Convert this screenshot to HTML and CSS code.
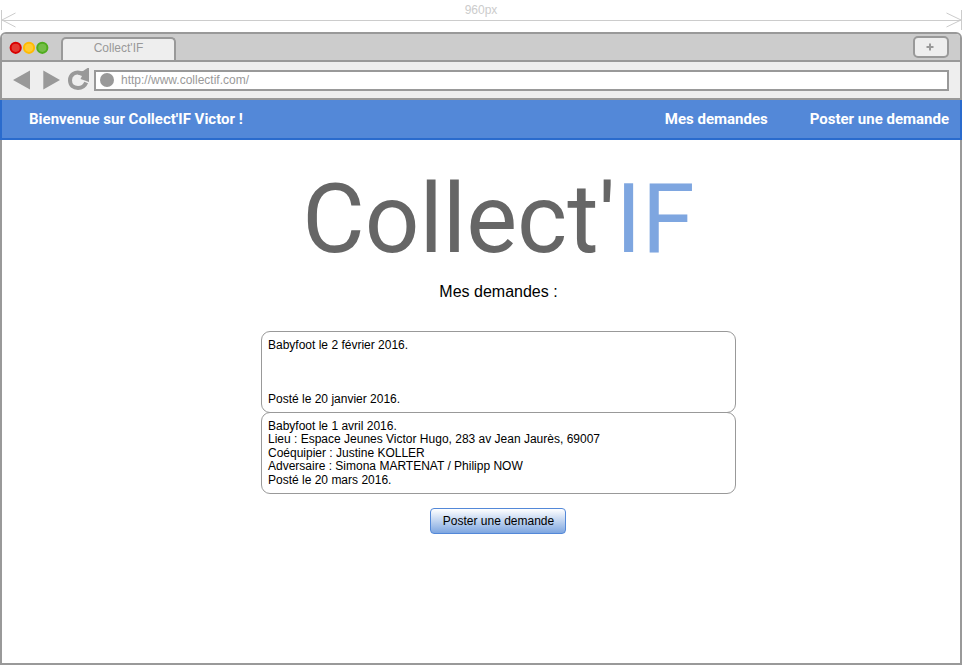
FILE: index.html
```html
<!DOCTYPE html>
<html lang="fr">
<head>
<meta charset="utf-8">
<title>Collect'IF</title>
<link rel="stylesheet" href="styles.css">
</head>
<body>
<div class="ruler">
  <svg class="ruler-lines" viewBox="0 0 962 32" width="962" height="32">
    <path d="M1.5 10V30M961.5 10V30M2 20.5H961M15.500 13L2 20L15.500 27M946.500 13L961 20L946.500 27"/>
  </svg>
  <span class="ruler-label">960px</span>
</div>
<div class="browser">
  <div class="tabbar">
    <svg class="lights" viewBox="0 0 42 14" width="42" height="14">
      <circle cx="7.700" cy="7.800" r="5.100" fill="#e33b32" stroke="#d90000" stroke-width="2"/>
      <circle cx="21" cy="7.800" r="5.100" fill="#ffcb32" stroke="#ffba00" stroke-width="2"/>
      <circle cx="34.300" cy="7.800" r="5.100" fill="#74bd46" stroke="#4fac1d" stroke-width="2"/>
    </svg>
    <div class="tab">Collect'IF</div>
    <button class="new-tab">
      <svg viewBox="0 0 8 8" width="8" height="8"><path d="M4 .5V7.500M.5 4H7.500"/></svg>
    </button>
  </div>
  <div class="toolbar">
    <svg class="controls" viewBox="0 0 92 36" width="92" height="36">
      <path d="M11 18L28 8.500V27.500ZM58 18L41.300 8.500V27.500Z" fill="#999"/>
      <path d="M78.500 10.900C73 9.500 68 12.500 68 18.300C68 23.300 71.500 26 76 26C80 26 82.600 24.400 84.200 20.500" fill="none" stroke="#999" stroke-width="4"/>
      <path d="M76 9.200L81 9L85.500 6H87V20L78.500 17L80 14L76 12.500Z" fill="#999"/>
    </svg>
    <div class="address"><span class="favicon"></span>http://www.collectif.com/</div>
  </div>
  <nav class="nav">
    <span class="welcome">Bienvenue sur Collect'IF Victor !</span>
    <a class="link">Mes demandes</a>
    <a class="link">Poster une demande</a>
  </nav>
  <main class="content">
    <h1 class="logo">Collect'<span class="logo-accent">IF</span></h1>
    <h2 class="title">Mes demandes :</h2>
    <div class="requests">
      <article class="request">
        <p>Babyfoot le 2 février 2016.</p>
        <p class="posted">Posté le 20 janvier 2016.</p>
      </article>
      <article class="request">
        <p>Babyfoot le 1 avril 2016.</p>
        <p>Lieu : Espace Jeunes Victor Hugo, 283 av Jean Jaurès, 69007</p>
        <p>Coéquipier : Justine KOLLER</p>
        <p>Adversaire : Simona MARTENAT / Philipp NOW</p>
        <p class="posted">Posté le 20 mars 2016.</p>
      </article>
    </div>
    <button class="submit">Poster une demande</button>
  </main>
</div>
</body>
</html>
```
FILE: styles.css
```css
* { box-sizing: border-box; }
body {
  margin: 0;
  width: 962px;
  height: 665px;
  display: flex;
  flex-direction: column;
  overflow: hidden;
  background: #fff;
  font: 12px/13.5px "Liberation Sans", Arial, sans-serif;
  color: #000;
}
h1, h2, p { margin: 0; font-weight: 400; }
svg { display: block; flex: none; }
button { font: inherit; color: inherit; }

.ruler {
  position: relative;
  height: 32px;
  flex: none;
  text-align: center;
  color: #ccc;
}
.ruler-lines path { fill: none; stroke: #ccc; stroke-width: 1; }
.ruler-label {
  position: absolute;
  top: 4px;
  left: 0;
  right: 0;
}

.browser {
  flex: 1;
  display: flex;
  flex-direction: column;
  border: 2px solid #999;
  border-radius: 6px 6px 0 0;
}
.tabbar {
  height: 28px;
  flex: none;
  display: flex;
  align-items: flex-end;
  padding: 0 11px 0 6px;
  background: #ccc;
  border-bottom: 2px solid #999;
  border-radius: 4px 4px 0 0;
}
.lights { align-self: center; }
.tab {
  width: 115px;
  height: 23px;
  margin-left: 11px;
  padding-top: 3px;
  border: 2px solid #999;
  border-bottom: 0;
  border-radius: 5px 5px 0 0;
  background: #eee;
  color: #999;
  text-align: center;
}
.new-tab {
  width: 36px;
  height: 22px;
  margin: 0 0 2px auto;
  padding: 0 2px 1px 0;
  display: flex;
  align-items: center;
  justify-content: center;
  border: 2px solid #999;
  border-radius: 5px;
  background: #eee;
}
.new-tab path { stroke: #999; stroke-width: 2; }
.toolbar {
  height: 38px;
  flex: none;
  display: flex;
  padding-right: 11px;
  background: #eee;
  border-bottom: 2px solid #999;
}
.address {
  flex: 1;
  height: 21px;
  margin-top: 8px;
  display: flex;
  align-items: center;
  gap: 7px;
  padding: 0 4px;
  border: 2px solid #999;
  background: #fff;
  color: #999;
}
.favicon {
  width: 14px;
  height: 14px;
  margin-top: -1px;
  border-radius: 50%;
  background: #999;
}

.nav {
  height: 40px;
  flex: none;
  display: flex;
  align-items: center;
  gap: 42px;
  margin: 0 -2px;
  padding: 0 11px 0 27px;
  background: #5388d8;
  border: 2px solid #2a6bcd;
  border-top: 0;
  color: #fff;
  font: 700 15px/20px Roboto, sans-serif;
}
.welcome { margin-right: auto; }

.content {
  flex: 1;
  display: flex;
  flex-direction: column;
  align-items: center;
  padding: 23px 0 0 35px;
}
.logo {
  font: 400 96px/112px Roboto, sans-serif;
  color: #666;
  white-space: nowrap;
}
.logo-accent { color: #7ea6e0; }
.title {
  margin-top: 8px;
  font-size: 16px;
  line-height: 18px;
}
.requests {
  width: 475px;
  margin-top: 30px;
}
.request {
  height: 82px;
  display: flex;
  flex-direction: column;
  padding: 6.5px 6px 6px;
  border: 1px solid #999;
  border-radius: 9px;
}
.request + .request { margin-top: -1px; }
.posted { margin-top: auto; }
.submit {
  width: 136px;
  height: 26px;
  margin: 14px 1px 0 0;
  padding: 1px 0 0 1px;
  border: 1px solid #5388d8;
  border-radius: 4px;
  background: linear-gradient(#fff, #7ea6e0);
}
```
